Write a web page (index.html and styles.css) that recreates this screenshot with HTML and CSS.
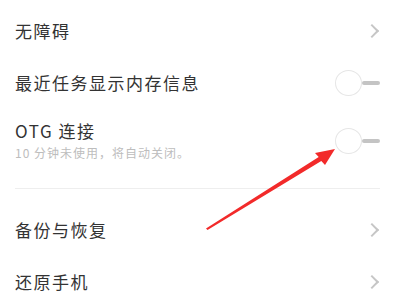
FILE: index.html
```html
<!DOCTYPE html>
<html lang="zh-CN">

<head>
    <meta charset="UTF-8">
    <title>系统设置</title>
    <link rel="stylesheet" href="styles.css">
</head>

<body>
    <div class="page">
        <ul class="list">
            <li class="item">
                <span class="title">无障碍</span>
                <span class="more"></span>
            </li>
            <li class="item">
                <span class="title">最近任务显示内存信息</span>
                <span class="switch"><i></i><b></b></span>
            </li>
            <li class="item item-otg">
                <div class="txt">
                    <p class="title">OTG 连接</p>
                    <p class="sub">10 分钟未使用，将自动关闭。</p>
                </div>
                <span class="switch"><i></i><b></b></span>
            </li>
        </ul>
        <div class="line"></div>
        <ul class="list list-b">
            <li class="item">
                <span class="title">备份与恢复</span>
                <span class="more"></span>
            </li>
            <li class="item">
                <span class="title">还原手机</span>
                <span class="more"></span>
            </li>
        </ul>

        <!-- 标注箭头 -->
        <svg class="arrow" width="400" height="300" viewBox="0 0 400 300">
            <polygon points="206,228.5 207.5,230 321.3,161.1 325,165 335,149 315,153 318.7,156.9" fill="#f22a2a" />
        </svg>
    </div>
</body>

</html>
```

FILE: styles.css
```css
* {
    margin: 0;
    padding: 0;
}

ul li {
    list-style: none;
}

body {
    background-color: #fff;
    font-family: "Noto Sans CJK SC", "Noto Sans", sans-serif;
    color: #333;
}

.page {
    position: relative;
    width: 400px;
    height: 300px;
    overflow: hidden;
}

.list {
    padding-top: 5px;
}

.list-b {
    padding-top: 15px;
}

.item {
    display: flex;
    align-items: center;
    justify-content: space-between;
    height: 52px;
    padding: 0 20px 0 15px;
}

.title {
    font-size: 17px;
    line-height: 18px;
    letter-spacing: 1.5px;
}

.item-otg {
    height: auto;
    padding-top: 13px;
    padding-bottom: 28px;
}

.txt .sub {
    margin-top: 6px;
    font-size: 12px;
    line-height: 14px;
    letter-spacing: 1px;
    color: #bdbdbd;
}

.more {
    width: 8px;
    height: 8px;
    margin-right: 3px;
    border-top: 2px solid #c6c6c6;
    border-right: 2px solid #c6c6c6;
    transform: rotate(45deg);
}

.switch {
    display: flex;
    align-items: center;
}

.switch i {
    width: 25px;
    height: 24px;
    border: 1px solid #e6e6e6;
    border-radius: 50%;
    background-color: #fff;
}

.switch b {
    width: 18px;
    height: 4px;
    border-radius: 2px;
    background-color: #c4c4c4;
}

.line {
    height: 1px;
    margin: 0 20px 0 15px;
    background-color: #eee;
}

.arrow {
    position: absolute;
    left: 0;
    top: 0;
}
```
